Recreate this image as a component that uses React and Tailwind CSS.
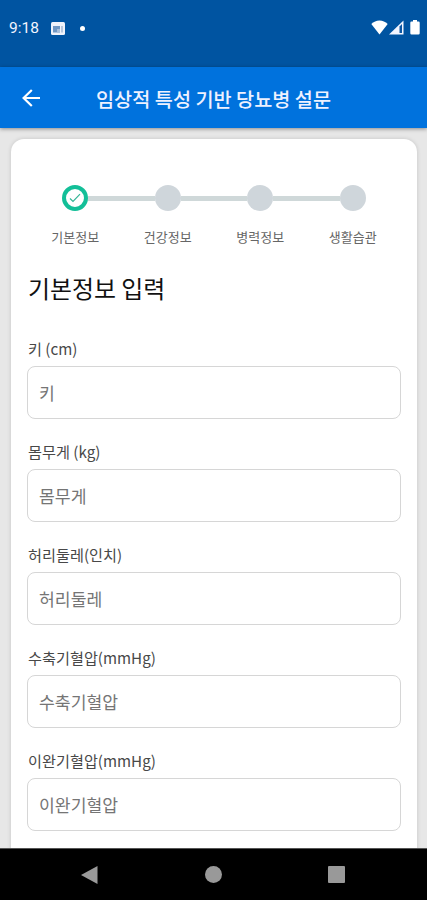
import React, { useState } from 'react';

const steps = [
  { id: 1, label: '기본정보', done: true },
  { id: 2, label: '건강정보', done: false },
  { id: 3, label: '병력정보', done: false },
  { id: 4, label: '생활습관', done: false },
];

const fields = [
  { name: 'height', label: '키 (cm)', placeholder: '키' },
  { name: 'weight', label: '몸무게 (kg)', placeholder: '몸무게' },
  { name: 'waist', label: '허리둘레(인치)', placeholder: '허리둘레' },
  { name: 'systolic', label: '수축기혈압(mmHg)', placeholder: '수축기혈압' },
  { name: 'diastolic', label: '이완기혈압(mmHg)', placeholder: '이완기혈압' },
];

const StatusBar = () => (
  <div className="flex h-[67px] shrink-0 items-start justify-between bg-[#0054a1] pl-[9px] pr-[7px] pt-[17px] text-white">
    <div className="flex h-[22px] items-center">
      <span className="w-[42px] font-['Roboto',sans-serif] text-[15.5px] leading-[22px] text-[#f2f5ff]">9:18</span>
      <svg width="14" height="13" viewBox="0 0 14 13" className="shrink-0">
        <rect width="14" height="13" rx="1.5" fill="#f0f3fb" />
        <path d="M2 4h7v6.500H2z" fill="#6f97c4" />
        <path d="M6 7h3v3.500H6z" fill="#a9bfdb" />
        <path d="M10 4h2v6.500h-2z" fill="#b8c8de" />
      </svg>
      <span className="ml-[15px] h-[5px] w-[5px] rounded-full bg-white" />
    </div>
    <div className="flex h-[20px] items-center">
      <svg width="17" height="15" viewBox="0 0 17 15">
        <path d="M.3 4C2.7 1.6 5.3.4 8.5.4S14.300 1.600 16.700 4L8.500 14.600z" fill="#fff" />
      </svg>
      <svg width="15" height="15" viewBox="0 0 15 15" className="ml-[1px]">
        <path d="M0 14.600L14.500.4V14.600z" fill="#f2f5ff" />
        <path d="M10.500 6.500L13 4V13H10.500z" fill="#0a56a3" />
      </svg>
      <svg width="10" height="15" viewBox="0 0 10 15" className="ml-[6px]">
        <path d="M3 0h4v1.500h1.500q1.200 0 1.200 1.200v10.600q0 1.200-1.200 1.200h-7q-1.200 0-1.200-1.200V2.700q0-1.200 1.200-1.200H3z" fill="#fff" />
      </svg>
    </div>
  </div>
);

const Header = () => (
  <header className="z-10 flex h-[61px] shrink-0 items-center bg-[#0072dd] pl-[22px] shadow-[0_1px_4px_rgba(0,0,0,0.4)]">
    <button type="button" aria-label="뒤로" className="mt-[1px] w-[74px]">
      <svg width="18" height="18" viewBox="0 0 18 18" fill="none" stroke="#fff" strokeWidth="2.200">
        <path d="M18 9H1.800M9.800 1L1.600 9l8.200 8" />
      </svg>
    </button>
    <h1 className="mt-[3px] whitespace-nowrap text-[19.7px] font-medium leading-[28px] text-[#eef1ff]">
      임상적 특성 기반 당뇨병 설문
    </h1>
  </header>
);

const Stepper = () => (
  <ol className="mx-[18px] flex">
    {steps.map((step, i) => (
      <li key={step.id} className="flex flex-1 flex-col items-center">
        <div className="flex w-full items-center">
          <span className={`h-[5px] flex-1 ${i > 0 ? 'bg-[#cfd8d9]' : ''}`} />
          {step.done ? (
            <span className="flex h-[26px] w-[26px] items-center justify-center rounded-full border-4 border-[#13bf98] bg-white">
              <svg width="12" height="10" viewBox="0 0 12 10" fill="none" stroke="#35b596" strokeWidth="1.200">
                <path d="M1 5.500L4 8.500L11 1.200" />
              </svg>
            </span>
          ) : (
            <span className="h-[26px] w-[26px] rounded-full bg-[#cfd6db]" />
          )}
          <span className={`h-[5px] flex-1 ${i < steps.length - 1 ? 'bg-[#cfd8d9]' : ''}`} />
        </div>
        <span className="mt-[16px] whitespace-nowrap text-[13px] leading-[20px] text-[#666]">{step.label}</span>
      </li>
    ))}
  </ol>
);

const Field = ({ label, name, placeholder, value, onChange }) => (
  <div className="mb-[21px]">
    <label htmlFor={name} className="block h-[22px] text-[15.200px] leading-[22px] text-[#484848]">
      {label}
    </label>
    <input
      id={name}
      name={name}
      value={value}
      onChange={onChange}
      placeholder={placeholder}
      className="-ml-px mt-[7px] block h-[53px] w-[374px] rounded-[8px] border border-[#d6d6d6] bg-white px-[11px] text-[17.200px] text-[#333] outline-none placeholder:text-[#757575]"
    />
  </div>
);

const NavBar = () => (
  <nav className="z-10 flex h-[52px] shrink-0 items-center justify-between border-t border-[#555] bg-black pl-[80px] pr-[82px]">
    <svg width="18" height="20" viewBox="0 0 18 20">
      <path d="M17.500 1v18L1 10z" fill="#9a9a9a" />
    </svg>
    <span className="h-[17px] w-[17px] rounded-full bg-[#999]" />
    <span className="h-[17px] w-[17px] rounded-[1px] bg-[#999]" />
  </nav>
);

export default function App() {
  const [formData, setFormData] = useState({
    height: '',
    weight: '',
    waist: '',
    systolic: '',
    diastolic: '',
  });

  const handleChange = (e) => {
    setFormData({ ...formData, [e.target.name]: e.target.value });
  };

  return (
    <div className="flex h-[900px] w-[427px] flex-col overflow-hidden bg-[#e7e7e7] font-['Noto_Sans_CJK_KR',sans-serif]">
      <StatusBar />
      <Header />
      <main className="flex min-h-0 flex-1 flex-col overflow-hidden pl-[11px] pr-[10px] pt-[11px]">
        <div className="flex-1 rounded-t-[13px] bg-white pt-[46px] shadow-[0_0_4px_rgba(0,0,0,0.15)]">
          <Stepper />
          <form className="pl-[17px]">
            <h2 className="mb-[31px] mt-[23px] text-[23.900px] leading-[36px] text-[#111]">기본정보 입력</h2>
            {fields.map((field) => (
              <Field
                key={field.name}
                {...field}
                value={formData[field.name]}
                onChange={handleChange}
              />
            ))}
          </form>
        </div>
      </main>
      <NavBar />
    </div>
  );
}
